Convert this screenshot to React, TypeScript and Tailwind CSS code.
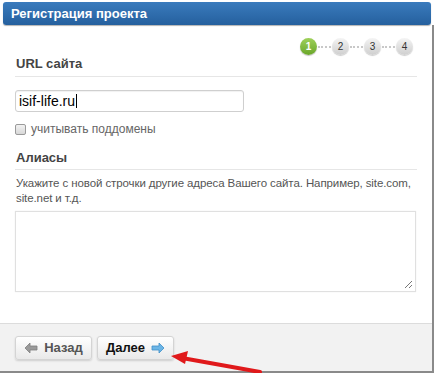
const Step = ({ n, active }: { n: number; active?: boolean }) => (
  <div
    className={
      active
        ? 'flex h-[17px] w-[17px] items-center justify-center rounded-full bg-gradient-to-b from-[#9fd15a] to-[#6aa628] text-[10px] font-bold text-white shadow-[0_1px_1px_rgba(0,0,0,0.25)]'
        : 'flex h-[17px] w-[17px] items-center justify-center rounded-full bg-gradient-to-b from-[#f4f4f4] to-[#cfcfcf] text-[10px] text-[#333] shadow-[0_1px_1px_rgba(0,0,0,0.2)]'
    }
  >
    {n}
  </div>
);

const Dots = () => <div className="mx-[1px] w-[13px] border-t-2 border-dotted border-[#c8c8c8]" />;

export default function App() {
  return (
    <div
      className="relative flex h-[373px] w-[434px] flex-col overflow-hidden bg-white"
      style={{ fontFamily: '"Liberation Sans", Arial, sans-serif' }}
    >
      <div className="mx-[3px] mt-[2px] flex h-[23px] items-center rounded-[3px] bg-gradient-to-b from-[#3a7bbd] to-[#25609e] pl-[8px] text-[13px] font-bold text-white shadow-[0_1px_1px_rgba(0,0,0,0.3)]">
        Регистрация проекта
      </div>

      <div className="flex flex-1 flex-col border-r-2 border-b-2 border-[#8a8a8a]">
        <div className="flex flex-1 flex-col px-[15px]">
          <div className="mt-[13px] flex items-center justify-end pr-[4px]">
            <Step n={1} active />
            <Dots />
            <Step n={2} />
            <Dots />
            <Step n={3} />
            <Dots />
            <Step n={4} />
          </div>

          <div className="mt-[1px] border-b border-[#e6e6e6] pb-[4px] pl-[1px] text-[13px] font-bold leading-[16px] text-[#444]">
            URL сайта
          </div>

          <div className="mt-[13px] flex h-[22px] w-[229px] items-center rounded-[3px] border border-[#cfcfcf] pl-[3px] text-[14px] text-black shadow-[inset_0_1px_1px_rgba(0,0,0,0.06)]">
            isif-life.ru
            <span className="ml-[1px] h-[14px] w-px bg-black" />
          </div>

          <label className="mt-[10px] flex items-center gap-[5px] text-[12px] leading-[14px] text-[#666]">
            <span className="h-[11px] w-[11px] rounded-[2px] border border-[#9a9a9a] bg-gradient-to-b from-[#f2f2f2] to-[#d8d8d8]" />
            учитывать поддомены
          </label>

          <div className="mt-[14px] border-b border-[#e6e6e6] pb-[3px] pl-[1px] text-[13px] font-bold leading-[16px] text-[#444]">
            Алиасы
          </div>

          <p className="mt-[6px] pl-[1px] text-[11.5px] leading-[15px] tracking-[-0.1px] text-[#555]">
            Укажите с новой строчки другие адреса Вашего сайта. Например, site.com, site.net и т.д.
          </p>

          <div className="relative mt-[5px] h-[81px] w-[401px] border border-[#e0e0e0] shadow-[0_0_1px_rgba(0,0,0,0.1)]">
            <svg className="absolute right-[2px] bottom-[2px]" width="9" height="9" viewBox="0 0 9 9">
              <path d="M8 1 L1 8 M8 5 L5 8" stroke="#777" strokeWidth="1" />
            </svg>
          </div>
        </div>

        <div className="flex h-[48px] items-start gap-[5px] border-t border-[#dcdcdc] bg-[#f2f2f2] pt-[12px] pl-[15px]">
          <button className="flex h-[24px] w-[77px] items-center justify-center gap-[6px] rounded-[3px] border border-[#d4d4d4] bg-gradient-to-b from-white to-[#e9e9e9] text-[13px] font-bold text-[#555] shadow-[0_1px_2px_rgba(0,0,0,0.15)]">
            <svg width="14" height="12" viewBox="0 0 14 12">
              <path d="M6 1 L1 6 L6 11 L6 8 L13 8 L13 4 L6 4 Z" fill="#9a9a9a" stroke="#7d7d7d" strokeWidth="0.8" />
            </svg>
            Назад
          </button>
          <button className="flex h-[24px] w-[77px] items-center justify-center gap-[6px] rounded-[3px] border border-[#d4d4d4] bg-gradient-to-b from-white to-[#e9e9e9] text-[13px] font-bold text-[#111] shadow-[0_1px_2px_rgba(0,0,0,0.15)]">
            Далее
            <svg width="14" height="12" viewBox="0 0 14 12">
              <path d="M8 1 L13 6 L8 11 L8 8 L1 8 L1 4 L8 4 Z" fill="#6bb5e6" stroke="#3f8fc8" strokeWidth="0.8" />
            </svg>
          </button>
        </div>
      </div>

      <svg className="absolute top-[346px] left-[168px]" width="96" height="27" viewBox="0 0 96 27">
        <path d="M92 26 L14 12" stroke="#e0191b" strokeWidth="4" strokeLinecap="round" />
        <path d="M3 10 L20 5 L17 18 Z" fill="#e0191b" />
      </svg>
    </div>
  );
}
